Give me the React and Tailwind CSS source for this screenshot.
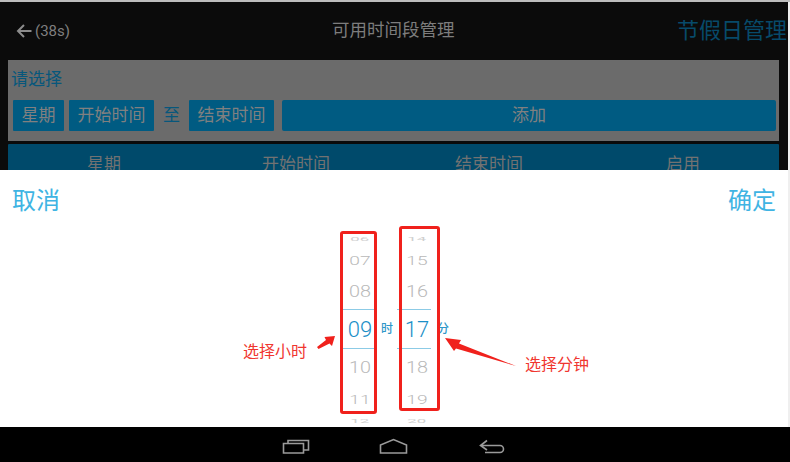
import React from "react";

function Wheel({ values, unit, unitClass, className, lineClass }) {
  return (
    <div className={"relative flex flex-col items-center " + className}>
      {values.map((v) => (
        <div key={v.t} className={"flex items-center justify-center leading-none " + v.c}>{v.t}</div>
      ))}
      <div className={"absolute h-px bg-[#8ccbe6] top-[79px] " + lineClass}></div>
      <div className={"absolute h-px bg-[#8ccbe6] top-[118px] " + lineClass}></div>
      <span className={"absolute top-[93px] text-[12px] font-medium leading-none text-[#2f97c9] " + unitClass}>{unit}</span>
    </div>
  );
}

const col = (a) => [
  { t: a[0], c: "h-[18px] text-[12px] text-[#cfcfcf] scale-y-[0.45] scale-x-[1.4]" },
  { t: a[1], c: "h-[26px] text-[16px] font-light text-[#b9b9b9] scale-y-[0.75] scale-x-[1.2]" },
  { t: a[2], c: "h-[36px] text-[18px] font-light text-[#b9b9b9] scale-y-90 scale-x-110" },
  { t: a[3], c: "h-[40px] text-[22px] font-light text-[#1c8fc7]" },
  { t: a[4], c: "h-[36px] text-[18px] font-light text-[#b9b9b9] scale-y-90 scale-x-110" },
  { t: a[5], c: "h-[28px] text-[16px] font-light text-[#b9b9b9] scale-y-[0.75] scale-x-[1.2]" },
  { t: a[6], c: "h-[14px] text-[12px] text-[#cfcfcf] scale-y-[0.45] scale-x-[1.4]" },
];

export default function App() {
  return (
    <div className="w-[790px] h-[462px] overflow-hidden flex flex-col bg-[#efefef] font-['Roboto','Noto_Sans_CJK_SC',sans-serif]">
      <div className="h-[2px] bg-[#bdbdbd] shrink-0"></div>
      <div className="w-[788px] h-[168px] shrink-0 bg-[#0b0b0b] overflow-hidden flex flex-col">
        <div className="h-[58px] flex items-center relative shrink-0">
          <div className="flex items-center gap-[3px] pl-[16px] text-[#7f7f7f] text-[15px]">
            <svg width="16" height="16" viewBox="0 0 16 16" fill="none" stroke="#8c8c8c" strokeWidth="2">
              <path d="M15.5 8H2M8 2L2 8l6 6" />
            </svg>
            <span>(38s)</span>
          </div>
          <span className="absolute left-[332px] text-[17.5px] text-[#7d7d7d] leading-none">可用时间段管理</span>
          <span className="ml-auto pr-[1px] text-[22px] leading-none text-[#074a6a]">节假日管理</span>
        </div>
        <div className="ml-[8px] w-[771px] h-[81px] shrink-0 bg-[#6b6b6b] pt-[8px] pl-[3px] pr-[3px]">
          <div className="h-[22px] text-[17px] leading-[22px] text-[#07577c]">请选择</div>
          <div className="mt-[10px] ml-px flex items-center h-[31px] text-[17px] text-[#808080]">
            <div className="w-[51px] h-full ml-px flex items-center justify-center bg-[#005b82] rounded-[1px]">星期</div>
            <div className="ml-[5px] w-[85px] h-full flex items-center justify-center bg-[#005b82] rounded-[1px]">开始时间</div>
            <div className="w-[35px] text-center text-[#07577c]">至</div>
            <div className="w-[85px] h-full flex items-center justify-center bg-[#005b82] rounded-[1px]">结束时间</div>
            <div className="ml-[8px] flex-1 h-full flex items-center justify-center bg-[#005b82] rounded-[2px]">添加</div>
          </div>
        </div>
        <div className="mt-[3px] ml-[8px] w-[771px] h-[40px] shrink-0 bg-[#004a6b] rounded-t-[1px] grid grid-cols-[193px_193px_193px_192px] text-[17px] text-[#727272]">
          <div className="pt-[8px] pl-[79px]">星期</div>
          <div className="pt-[8px] pl-[61px]">开始时间</div>
          <div className="pt-[8px] pl-[61px]">结束时间</div>
          <div className="pt-[8px] pl-[79px]">启用</div>
        </div>
      </div>
      <div className="w-[788px] h-[257px] shrink-0 bg-white relative overflow-hidden">
        <div className="flex justify-between px-[12px] pt-[15px] text-[24px] leading-[32px] text-[#3fb4e3]">
          <span>取消</span>
          <span>确定</span>
        </div>
        <div className="absolute left-0 top-[60px] flex">
          <Wheel values={col(["06", "07", "08", "09", "10", "11", "12"])} unit="时" unitClass="left-[41px]" className="ml-[340px] w-[40px]" lineClass="left-[3px] w-[32px]" />
          <Wheel values={col(["14", "15", "16", "17", "18", "19", "20"])} unit="分" unitClass="left-[40px]" className="ml-[17px] w-[40px]" lineClass="left-0 w-[34px]" />
        </div>
        <div className="absolute left-[340px] top-[61px] w-[37px] h-[183px] border-[3px] border-[#f0211c] rounded-[3px]"></div>
        <div className="absolute left-[399px] top-[56px] w-[41px] h-[185px] border-[3px] border-[#f0211c] rounded-[3px]"></div>
        <span className="absolute left-[243px] top-[172px] text-[16px] leading-[20px] text-[#f0362f]">选择小时</span>
        <span className="absolute left-[525px] top-[185px] text-[16px] leading-[20px] text-[#f0362f]">选择分钟</span>
        <svg className="absolute left-[312px] top-[162px]" width="24" height="24" viewBox="0 0 24 24">
          <path d="M5 15L14 8 12.500 5 23 4 20 14 17.500 11.500 6.500 17Z" fill="#f0211c" />
        </svg>
        <svg className="absolute left-[442px] top-[163px]" width="76" height="36" viewBox="0 0 76 36">
          <path d="M3 5L19 7 17 10.500 74 33 14 15.500 12 18Z" fill="#f0211c" />
        </svg>
      </div>
      <div className="h-[35px] shrink-0 bg-black flex items-center pl-[280px]">
        <svg width="230" height="22" viewBox="0 0 230 22" fill="none" stroke="#9a9a9a" strokeWidth="1.6">
          <path d="M3.500 9.500h20v9.500h-20zM8 9.500V6.500h20.500v9.500h-5" />
          <path d="M100.500 19V11L113.500 5.500 126.500 11V19Z" />
          <path d="M207 6.500L200.500 11.500 207 16M200.500 11.500H220a3.500 3.500 0 0 1 0 7H205" />
        </svg>
      </div>
    </div>
  );
}
